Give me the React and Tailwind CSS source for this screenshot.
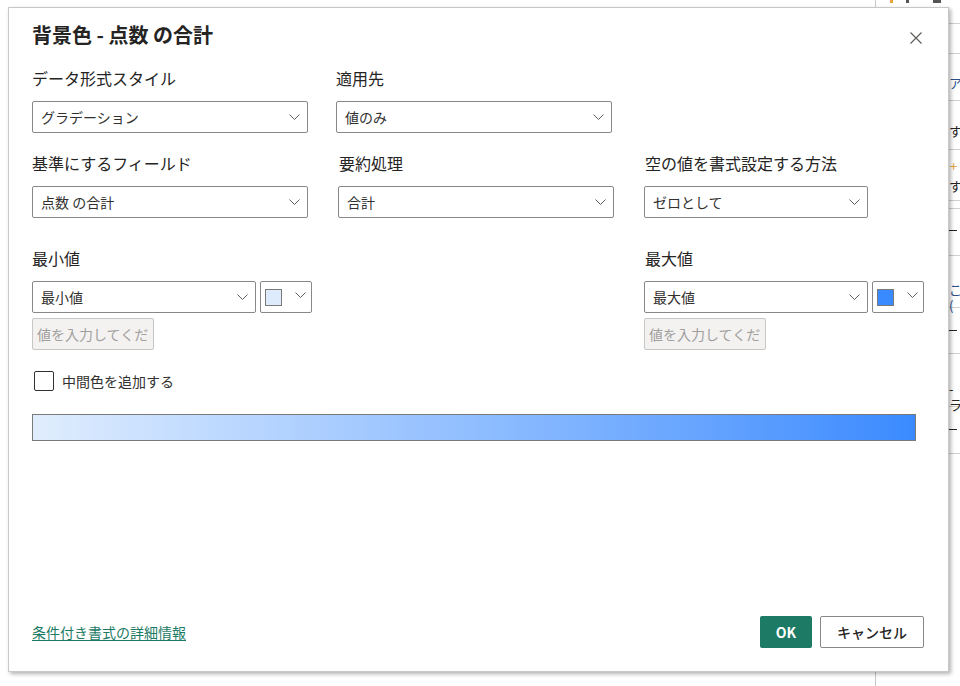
import React from "react";

const FONT = "font-['Noto_Sans_CJK_JP','Liberation_Sans',sans-serif]";

function Chevron({ cls = "" }) {
  return (
    <svg width="11" height="6" viewBox="0 0 11 6" className={cls}>
      <polyline points="0.5,0.5 5.5,5.5 10.5,0.5" fill="none" stroke="#605e5c" strokeWidth="1" />
    </svg>
  );
}

function Dropdown({ value, w }) {
  return (
    <div className={"h-[32px] border border-[#8a8886] rounded-[2px] bg-white flex items-center pl-[8px] pr-[7px] " + w}>
      <span className="flex-1 text-[14px] leading-[20px] text-[#323130]">{value}</span>
      <Chevron />
    </div>
  );
}

function ColorPick({ swatch }) {
  return (
    <div className="w-[52px] h-[32px] border border-[#8a8886] rounded-[2px] bg-white flex items-start pl-[4px] pr-[5px] pt-[7px]">
      <div className={"w-[17px] h-[17px] border border-[#7a7a7a] " + swatch} />
      <Chevron cls="ml-auto mt-[3px]" />
    </div>
  );
}

function DisabledInput() {
  return (
    <div className="mt-[5px] w-[122px] h-[32px] bg-[#f3f2f1] border border-[#c8c6c4] rounded-[2px] flex items-center px-[4px] text-[14px] leading-[20px] text-[#a19f9d]">
      値を入力してくだ
    </div>
  );
}

function Label({ children, cls = "" }) {
  return <div className={"text-[16px] leading-[22px] text-[#252423] " + cls}>{children}</div>;
}

function Backdrop() {
  const lines = [23, 53, 100, 149, 200, 208, 255, 307, 353, 406, 453];
  return (
    <>
      <div className="absolute left-[875px] top-0 w-px h-[686px] bg-[#c8c8c8]" />
      <div className="absolute left-[890px] top-[-3px] w-[3px] h-[6px] bg-[#e8a33b]" />
      <div className="absolute left-[906px] top-0 w-[3px] h-[3px] bg-[#555]" />
      <div className="absolute left-[933px] top-0 w-[8px] h-[3px] bg-[#555]" />
      {lines.map((y) => (
        <div key={y} className="absolute left-[949px] w-[11px] h-px bg-[#d2d0ce]" style={{ top: y }} />
      ))}
      <div className="absolute left-[949px] top-[75px] text-[13px] leading-[16px] text-[#2b4f8a]">ア/</div>
      <div className="absolute left-[949px] top-[123px] text-[13px] leading-[16px] text-[#252423]">す</div>
      <div className="absolute left-[950px] top-[158px] text-[13px] leading-[16px] text-[#e8a33b]">+</div>
      <div className="absolute left-[949px] top-[178px] text-[13px] leading-[16px] text-[#252423]">す</div>
      <div className="absolute left-[949px] top-[230px] w-[8px] h-px bg-[#252423]" />
      <div className="absolute left-[949px] top-[282px] text-[13px] leading-[16px] text-[#2b4f8a]">こ(</div>
      <div className="absolute left-[949px] top-[330px] w-[8px] h-px bg-[#252423]" />
      <div className="absolute left-[949px] top-[381px] text-[13px] leading-[16px] text-[#252423]">-ラ</div>
      <div className="absolute left-[949px] top-[429px] w-[8px] h-px bg-[#252423]" />
    </>
  );
}

export default function App() {
  return (
    <div className={"relative w-[960px] h-[686px] bg-white overflow-hidden " + FONT}>
      <Backdrop />
      <div className="absolute left-[8px] top-[7px] w-[941px] h-[665px] bg-white border border-[#c8c8c8] shadow-[2px_2px_4px_rgba(0,0,0,0.3)] flex flex-col pl-[23px]">
        <button className="absolute right-[25px] top-[23px] w-[14px] h-[14px]">
          <svg width="14" height="14" viewBox="0 0 14 14">
            <path d="M1.5 1.5 L12.5 12.5 M12.5 1.5 L1.5 12.5" stroke="#605e5c" strokeWidth="1.2" />
          </svg>
        </button>

        <h1 className="mt-[14px] text-[20px] leading-[26px] font-bold text-[#252423]">背景色 - 点数 の合計</h1>

        <div className="mt-[19px] flex gap-[28px]">
          <div>
            <Label>データ形式スタイル</Label>
            <div className="mt-[12px]"><Dropdown value="グラデーション" w="w-[276px]" /></div>
          </div>
          <div>
            <Label>適用先</Label>
            <div className="mt-[12px]"><Dropdown value="値のみ" w="w-[276px]" /></div>
          </div>
        </div>

        <div className="mt-[19px] flex gap-[30px]">
          <div>
            <Label>基準にするフィールド</Label>
            <div className="mt-[12px]"><Dropdown value="点数 の合計" w="w-[276px]" /></div>
          </div>
          <div>
            <Label cls="pl-[1px]">要約処理</Label>
            <div className="mt-[12px]"><Dropdown value="合計" w="w-[276px]" /></div>
          </div>
          <div>
            <Label cls="pl-[1px]">空の値を書式設定する方法</Label>
            <div className="mt-[12px]"><Dropdown value="ゼロとして" w="w-[224px]" /></div>
          </div>
        </div>

        <div className="mt-[29px] flex">
          <div className="w-[612px]">
            <Label>最小値</Label>
            <div className="mt-[12px] flex gap-[4px]">
              <Dropdown value="最小値" w="w-[224px]" />
              <ColorPick swatch="bg-[#deebfc]" />
            </div>
            <DisabledInput />
          </div>
          <div>
            <Label cls="pl-[1px]">最大値</Label>
            <div className="mt-[12px] flex gap-[4px]">
              <Dropdown value="最大値" w="w-[224px]" />
              <ColorPick swatch="bg-[#3a8aff]" />
            </div>
            <DisabledInput />
          </div>
        </div>

        <label className="mt-[21px] ml-[2px] flex items-center gap-[8px]">
          <span className="w-[20px] h-[20px] border border-[#323130] rounded-[2px] bg-white" />
          <span className="text-[14px] leading-[20px] text-[#323130]">中間色を追加する</span>
        </label>

        <div className="mt-[23px] w-[884px] h-[27px] border border-[#7a7a7a] bg-linear-to-r from-[#e0edfd] to-[#3a8aff]" />

        <div className="mt-auto mb-[23px] mr-[24px] flex items-center">
          <a className="text-[14px] leading-[20px] text-[#1d7a64] underline underline-offset-2 cursor-pointer">条件付き書式の詳細情報</a>
          <button className="ml-auto w-[52px] h-[32px] rounded-[2px] bg-[#1d7a64] text-white text-[14px] font-bold">OK</button>
          <button className="ml-[8px] w-[104px] h-[32px] rounded-[2px] border border-[#8a8886] bg-white text-[#252423] text-[14px] font-medium">キャンセル</button>
        </div>
      </div>
    </div>
  );
}
